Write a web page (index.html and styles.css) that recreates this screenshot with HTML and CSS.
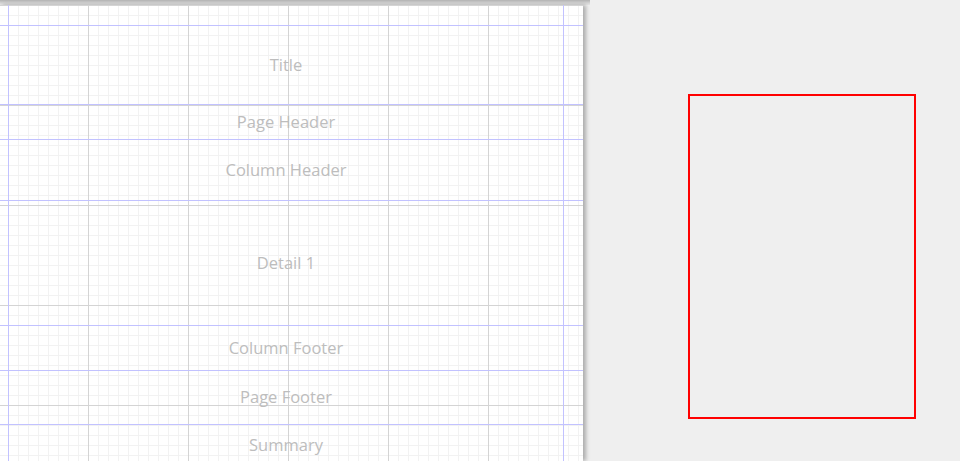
FILE: index.html
```html
<!DOCTYPE html>
<html>
<head>
<meta charset="utf-8">
<link rel="stylesheet" href="styles.css">
</head>
<body>
<div class="workspace">
  <div class="page-col">
    <div class="top-shadow"></div>
    <div class="page">
      <div class="report">
        <div class="band band-title"><span>Title</span></div>
        <div class="band band-page-header"><span>Page Header</span></div>
        <div class="band band-col-header"><span>Column Header</span></div>
        <div class="band band-detail"><span>Detail 1</span></div>
        <div class="band band-col-footer"><span>Column Footer</span></div>
        <div class="band band-page-footer"><span>Page Footer</span></div>
        <div class="band band-summary"><span>Summary</span></div>
      </div>
    </div>
  </div>
  <div class="preview-area">
    <div class="preview-frame"></div>
  </div>
</div>
</body>
</html>
```

FILE: styles.css
```css
html, body {
  margin: 0;
  padding: 0;
}
body {
  background: #efefef;
  width: 960px;
  height: 461px;
  overflow: hidden;
  font-family: "Open Sans", "Noto Sans", sans-serif;
}
.workspace {
  display: flex;
  height: 461px;
}
.page-col {
  width: 590px;
  flex: none;
  display: flex;
  flex-direction: column;
}
.top-shadow {
  height: 5px;
  width: 590px;
  background: linear-gradient(to bottom, #b2b2b2, #d6d6d6 60%, #e6e6e6);
}
.page {
  width: 583px;
  height: 456px;
  background-color: #ffffff;
  background-image:
    linear-gradient(#c2c2ff, #c2c2ff),
    linear-gradient(#c2c2ff, #c2c2ff),
    linear-gradient(to right, #d4d4d4 1px, transparent 1px),
    linear-gradient(to bottom, #d4d4d4 1px, transparent 1px),
    linear-gradient(to right, #f2f2f2 1px, transparent 1px),
    linear-gradient(to bottom, #f2f2f2 1px, transparent 1px);
  background-size: 1px 100%, 1px 100%, 100px 100%, 100% 100px, 10px 100%, 100% 10px;
  background-position: 8px 0, 563px 0, 88px 0, 0 0, 8px 0, 0 0;
  background-repeat: no-repeat, no-repeat, repeat, repeat, repeat, repeat;
  box-shadow: 3px 0 4px rgba(0, 0, 0, 0.28);
  overflow: hidden;
}
.report {
  margin-top: 20px;
  border-top: 1px solid #c2c2ff;
}
.band {
  display: flex;
  align-items: center;
  justify-content: center;
  box-sizing: content-box;
  padding: 0 19px 2px 8px;
  border-bottom: 1px solid #c2c2ff;
  color: #bdbdbd;
  font-size: 16.5px;
}
.band-title { height: 76px; }
.band-page-header { height: 32px; }
.band-col-header { height: 58px; }
.band-detail { height: 122px; }
.band-col-footer { height: 42px; }
.band-page-footer { height: 51px; }
.band-summary { height: 38px; border-bottom: none; }

.preview-area {
  flex: 1;
  padding-left: 98px;
  padding-top: 94px;
}
.preview-frame {
  width: 224px;
  height: 321px;
  border: 2px solid #ff0000;
}
```
